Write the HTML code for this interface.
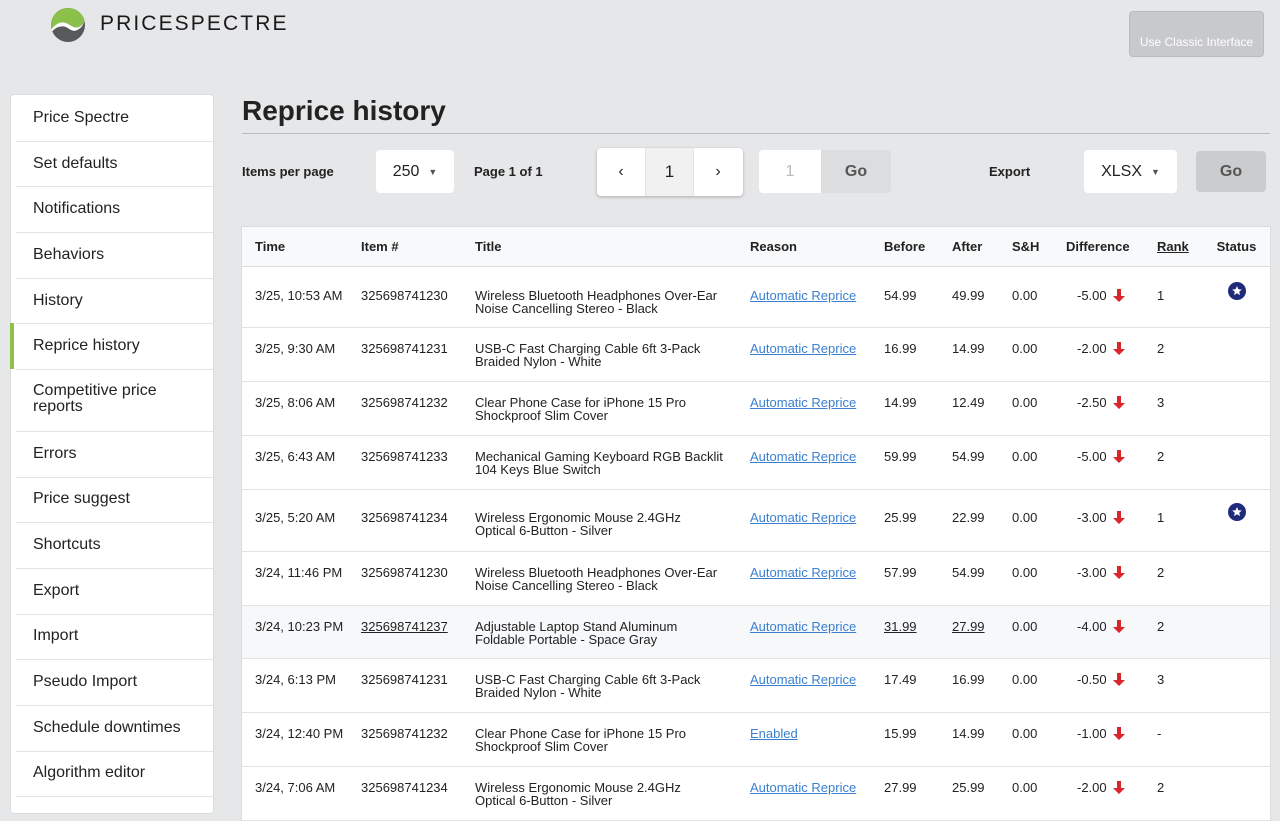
<!DOCTYPE html>
<html><head><meta charset="utf-8"><style>
*{box-sizing:border-box}
body{margin:0;width:1280px;height:800px;overflow:hidden;background:#e6e7e9;font-family:"Liberation Sans",sans-serif;color:#222;position:relative}
.abs{position:absolute}
.side{position:absolute;left:10px;top:94px;width:204px;height:720px;background:#fff;border-radius:4px;border:1px solid #dcdcdc}
.side div{position:absolute;left:22px;font-size:16px;color:#222}
.side hr{position:absolute;left:5px;right:0;margin:0;border:0;border-top:1px solid #e3e3e3}
.btn{position:absolute;background:#fff;border-radius:4px;font-size:16px;display:flex;align-items:center;justify-content:center}
table{position:absolute;left:242px;top:227px;width:1028px;border-collapse:collapse;background:#fff;table-layout:fixed;font-size:13px;outline:1px solid #dcdcdc}
th{font-weight:bold;text-align:left;height:39px;padding:0 0 0 13px;border-bottom:1px solid #ddd;background:#f8f9fa;font-size:13px}
td{padding:14px 0 0 13px;border-bottom:1px solid #e3e3e3;vertical-align:top;line-height:13px}
td.t{padding-right:14px}
td.c,th.c{text-align:center;padding-left:0}
tr.r1 td{padding-top:22px}
tr.r5 td{padding-top:21px}
tr.r1 td.c{padding-top:14px}
tr.r5 td.c{padding-top:12px}
a{color:#3a7fd0;text-decoration:underline}
.ar{display:inline-block;vertical-align:top;margin-left:6px}
</style></head><body>
<svg class="abs" style="left:50px;top:7px" width="36" height="36" viewBox="0 0 36 36">
<circle cx="18" cy="18" r="17" fill="#58595b"/>
<path d="M18 1 A17 17 0 0 0 1.5 22 C6 17 10 14 16 16 C21 18 24 22 29 20 C33 18 35 14 34.5 13 A17 17 0 0 0 18 1Z" fill="#8bc04a"/>
<path d="M1.5 22 C6 17 10 14 16 16 C21 18 24 22 29 20 C33 18 35 14 34.5 13 C34 17 31 22 26 23.5 C21 25 18 20 14 19.5 C9 19 5 21 2.2 24.5Z" fill="#fff"/>
</svg>
<div class="abs" style="left:100px;top:12px;font-size:21px;letter-spacing:2.1px;color:#1a1a1a;line-height:24px">PRICESPECTRE</div>
<div class="btn" style="left:1129px;top:11px;width:135px;height:46px;background:#c8c9cb;color:#fff;font-size:12px;align-items:flex-end;padding-bottom:7px;border:1px solid #bbb">Use Classic Interface</div>

<div class="side">
<div style="top:14px">Price Spectre</div><hr style="top:46px">
<div style="top:60px">Set defaults</div><hr style="top:91px">
<div style="top:105px">Notifications</div><hr style="top:137px">
<div style="top:151px">Behaviors</div><hr style="top:183px">
<div style="top:197px">History</div><hr style="top:228px">
<div style="top:242px">Reprice history</div><hr style="top:274px">
<div style="top:288px;line-height:16px">Competitive price<br>reports</div><hr style="top:336px">
<div style="top:350px">Errors</div><hr style="top:382px">
<div style="top:395px">Price suggest</div><hr style="top:427px">
<div style="top:441px">Shortcuts</div><hr style="top:473px">
<div style="top:487px">Export</div><hr style="top:519px">
<div style="top:532px">Import</div><hr style="top:564px">
<div style="top:578px">Pseudo Import</div><hr style="top:610px">
<div style="top:624px">Schedule downtimes</div><hr style="top:656px">
<div style="top:669px">Algorithm editor</div><hr style="top:701px">
</div>
<div class="abs" style="left:10px;top:323px;width:4px;height:46px;background:#8bc04a"></div>

<div class="abs" style="left:242px;top:95px;font-size:28px;font-weight:bold;color:#222">Reprice history</div>
<div class="abs" style="left:242px;top:133px;width:1028px;height:1px;background:#bbb"></div>

<div class="abs" style="left:242px;top:164px;font-size:13px;font-weight:bold">Items per page</div>
<div class="btn" style="left:376px;top:150px;width:78px;height:43px">250 <span style="font-size:9px;margin-left:9px;color:#555">▼</span></div>
<div class="abs" style="left:474px;top:164px;font-size:13px;font-weight:bold">Page 1 of 1</div>
<div class="btn" style="left:597px;top:148px;width:146px;height:48px;box-shadow:0 1px 3px rgba(0,0,0,.25);justify-content:flex-start;overflow:hidden">
<span style="width:48px;text-align:center">‹</span><span style="width:49px;height:48px;background:#f1f1f1;border-left:1px solid #e3e3e3;border-right:1px solid #e3e3e3;display:flex;align-items:center;justify-content:center;font-size:17px">1</span><span style="width:48px;text-align:center">›</span></div>
<div class="btn" style="left:759px;top:150px;width:62px;height:43px;color:#bbb;border-radius:4px 0 0 4px">1</div>
<div class="btn" style="left:821px;top:150px;width:70px;height:43px;background:#dcdddf;color:#555;font-weight:bold;border-radius:0 4px 4px 0">Go</div>
<div class="abs" style="left:989px;top:164px;font-size:13px;font-weight:bold">Export</div>
<div class="btn" style="left:1084px;top:150px;width:93px;height:43px">XLSX <span style="font-size:9px;margin-left:9px;color:#555">▼</span></div>
<div class="btn" style="left:1196px;top:151px;width:70px;height:41px;background:#cbcccd;color:#555;font-weight:bold">Go</div>

<table>
<colgroup><col style="width:106px"><col style="width:114px"><col style="width:275px"><col style="width:134px"><col style="width:68px"><col style="width:60px"><col style="width:54px"><col style="width:91px"><col style="width:59px"><col style="width:67px"></colgroup>
<tr><th>Time</th><th>Item #</th><th>Title</th><th>Reason</th><th>Before</th><th>After</th><th>S&amp;H</th><th>Difference</th><th><u>Rank</u></th><th class="c">Status</th></tr>
<tr class="r1" style="height:61px"><td>3/25, 10:53 AM</td><td>325698741230</td><td class="t">Wireless Bluetooth Headphones Over-Ear Noise Cancelling Stereo - Black</td><td><a>Automatic Reprice</a></td><td>54.99</td><td>49.99</td><td>0.00</td><td style="padding-left:24px">-5.00<svg class="ar" width="12" height="13" viewBox="0 0 12 13"><path d="M4 0h4v7h4l-6 6-6-6h4z" fill="#d9262b"/></svg></td><td>1</td><td class="c"><svg width="20" height="20" viewBox="0 0 20 20"><circle cx="10" cy="10" r="9" fill="#1f2a7a"/><path d="M10 5l1.4 3.2 3.4.3-2.6 2.2.8 3.4L10 12.3 7 14.1l.8-3.4L5.2 8.5l3.4-.3z" fill="#fff"/></svg></td></tr>
<tr style="height:54px"><td>3/25, 9:30 AM</td><td>325698741231</td><td class="t">USB-C Fast Charging Cable 6ft 3-Pack Braided Nylon - White</td><td><a>Automatic Reprice</a></td><td>16.99</td><td>14.99</td><td>0.00</td><td style="padding-left:24px">-2.00<svg class="ar" width="12" height="13" viewBox="0 0 12 13"><path d="M4 0h4v7h4l-6 6-6-6h4z" fill="#d9262b"/></svg></td><td>2</td><td></td></tr>
<tr style="height:54px"><td>3/25, 8:06 AM</td><td>325698741232</td><td class="t">Clear Phone Case for iPhone 15 Pro Shockproof Slim Cover</td><td><a>Automatic Reprice</a></td><td>14.99</td><td>12.49</td><td>0.00</td><td style="padding-left:24px">-2.50<svg class="ar" width="12" height="13" viewBox="0 0 12 13"><path d="M4 0h4v7h4l-6 6-6-6h4z" fill="#d9262b"/></svg></td><td>3</td><td></td></tr>
<tr style="height:54px"><td>3/25, 6:43 AM</td><td>325698741233</td><td class="t">Mechanical Gaming Keyboard RGB Backlit 104 Keys Blue Switch</td><td><a>Automatic Reprice</a></td><td>59.99</td><td>54.99</td><td>0.00</td><td style="padding-left:24px">-5.00<svg class="ar" width="12" height="13" viewBox="0 0 12 13"><path d="M4 0h4v7h4l-6 6-6-6h4z" fill="#d9262b"/></svg></td><td>2</td><td></td></tr>
<tr class="r5" style="height:62px"><td>3/25, 5:20 AM</td><td>325698741234</td><td class="t">Wireless Ergonomic Mouse 2.4GHz<br>Optical 6-Button - Silver</td><td><a>Automatic Reprice</a></td><td>25.99</td><td>22.99</td><td>0.00</td><td style="padding-left:24px">-3.00<svg class="ar" width="12" height="13" viewBox="0 0 12 13"><path d="M4 0h4v7h4l-6 6-6-6h4z" fill="#d9262b"/></svg></td><td>1</td><td class="c"><svg width="20" height="20" viewBox="0 0 20 20"><circle cx="10" cy="10" r="9" fill="#1f2a7a"/><path d="M10 5l1.4 3.2 3.4.3-2.6 2.2.8 3.4L10 12.3 7 14.1l.8-3.4L5.2 8.5l3.4-.3z" fill="#fff"/></svg></td></tr>
<tr style="height:54px"><td>3/24, 11:46 PM</td><td>325698741230</td><td class="t">Wireless Bluetooth Headphones Over-Ear Noise Cancelling Stereo - Black</td><td><a>Automatic Reprice</a></td><td>57.99</td><td>54.99</td><td>0.00</td><td style="padding-left:24px">-3.00<svg class="ar" width="12" height="13" viewBox="0 0 12 13"><path d="M4 0h4v7h4l-6 6-6-6h4z" fill="#d9262b"/></svg></td><td>2</td><td></td></tr>
<tr style="height:53px;background:#f7f8fa"><td>3/24, 10:23 PM</td><td><u>325698741237</u></td><td class="t">Adjustable Laptop Stand Aluminum<br>Foldable Portable - Space Gray</td><td><a>Automatic Reprice</a></td><td><u>31.99</u></td><td><u>27.99</u></td><td>0.00</td><td style="padding-left:24px">-4.00<svg class="ar" width="12" height="13" viewBox="0 0 12 13"><path d="M4 0h4v7h4l-6 6-6-6h4z" fill="#d9262b"/></svg></td><td>2</td><td></td></tr>
<tr style="height:54px"><td>3/24, 6:13 PM</td><td>325698741231</td><td class="t">USB-C Fast Charging Cable 6ft 3-Pack Braided Nylon - White</td><td><a>Automatic Reprice</a></td><td>17.49</td><td>16.99</td><td>0.00</td><td style="padding-left:24px">-0.50<svg class="ar" width="12" height="13" viewBox="0 0 12 13"><path d="M4 0h4v7h4l-6 6-6-6h4z" fill="#d9262b"/></svg></td><td>3</td><td></td></tr>
<tr style="height:54px"><td>3/24, 12:40 PM</td><td>325698741232</td><td class="t">Clear Phone Case for iPhone 15 Pro Shockproof Slim Cover</td><td><a>Enabled</a></td><td>15.99</td><td>14.99</td><td>0.00</td><td style="padding-left:24px">-1.00<svg class="ar" width="12" height="13" viewBox="0 0 12 13"><path d="M4 0h4v7h4l-6 6-6-6h4z" fill="#d9262b"/></svg></td><td>-</td><td></td></tr>
<tr style="height:54px"><td>3/24, 7:06 AM</td><td>325698741234</td><td class="t">Wireless Ergonomic Mouse 2.4GHz<br>Optical 6-Button - Silver</td><td><a>Automatic Reprice</a></td><td>27.99</td><td>25.99</td><td>0.00</td><td style="padding-left:24px">-2.00<svg class="ar" width="12" height="13" viewBox="0 0 12 13"><path d="M4 0h4v7h4l-6 6-6-6h4z" fill="#d9262b"/></svg></td><td>2</td><td></td></tr>
</table>
</body></html>
